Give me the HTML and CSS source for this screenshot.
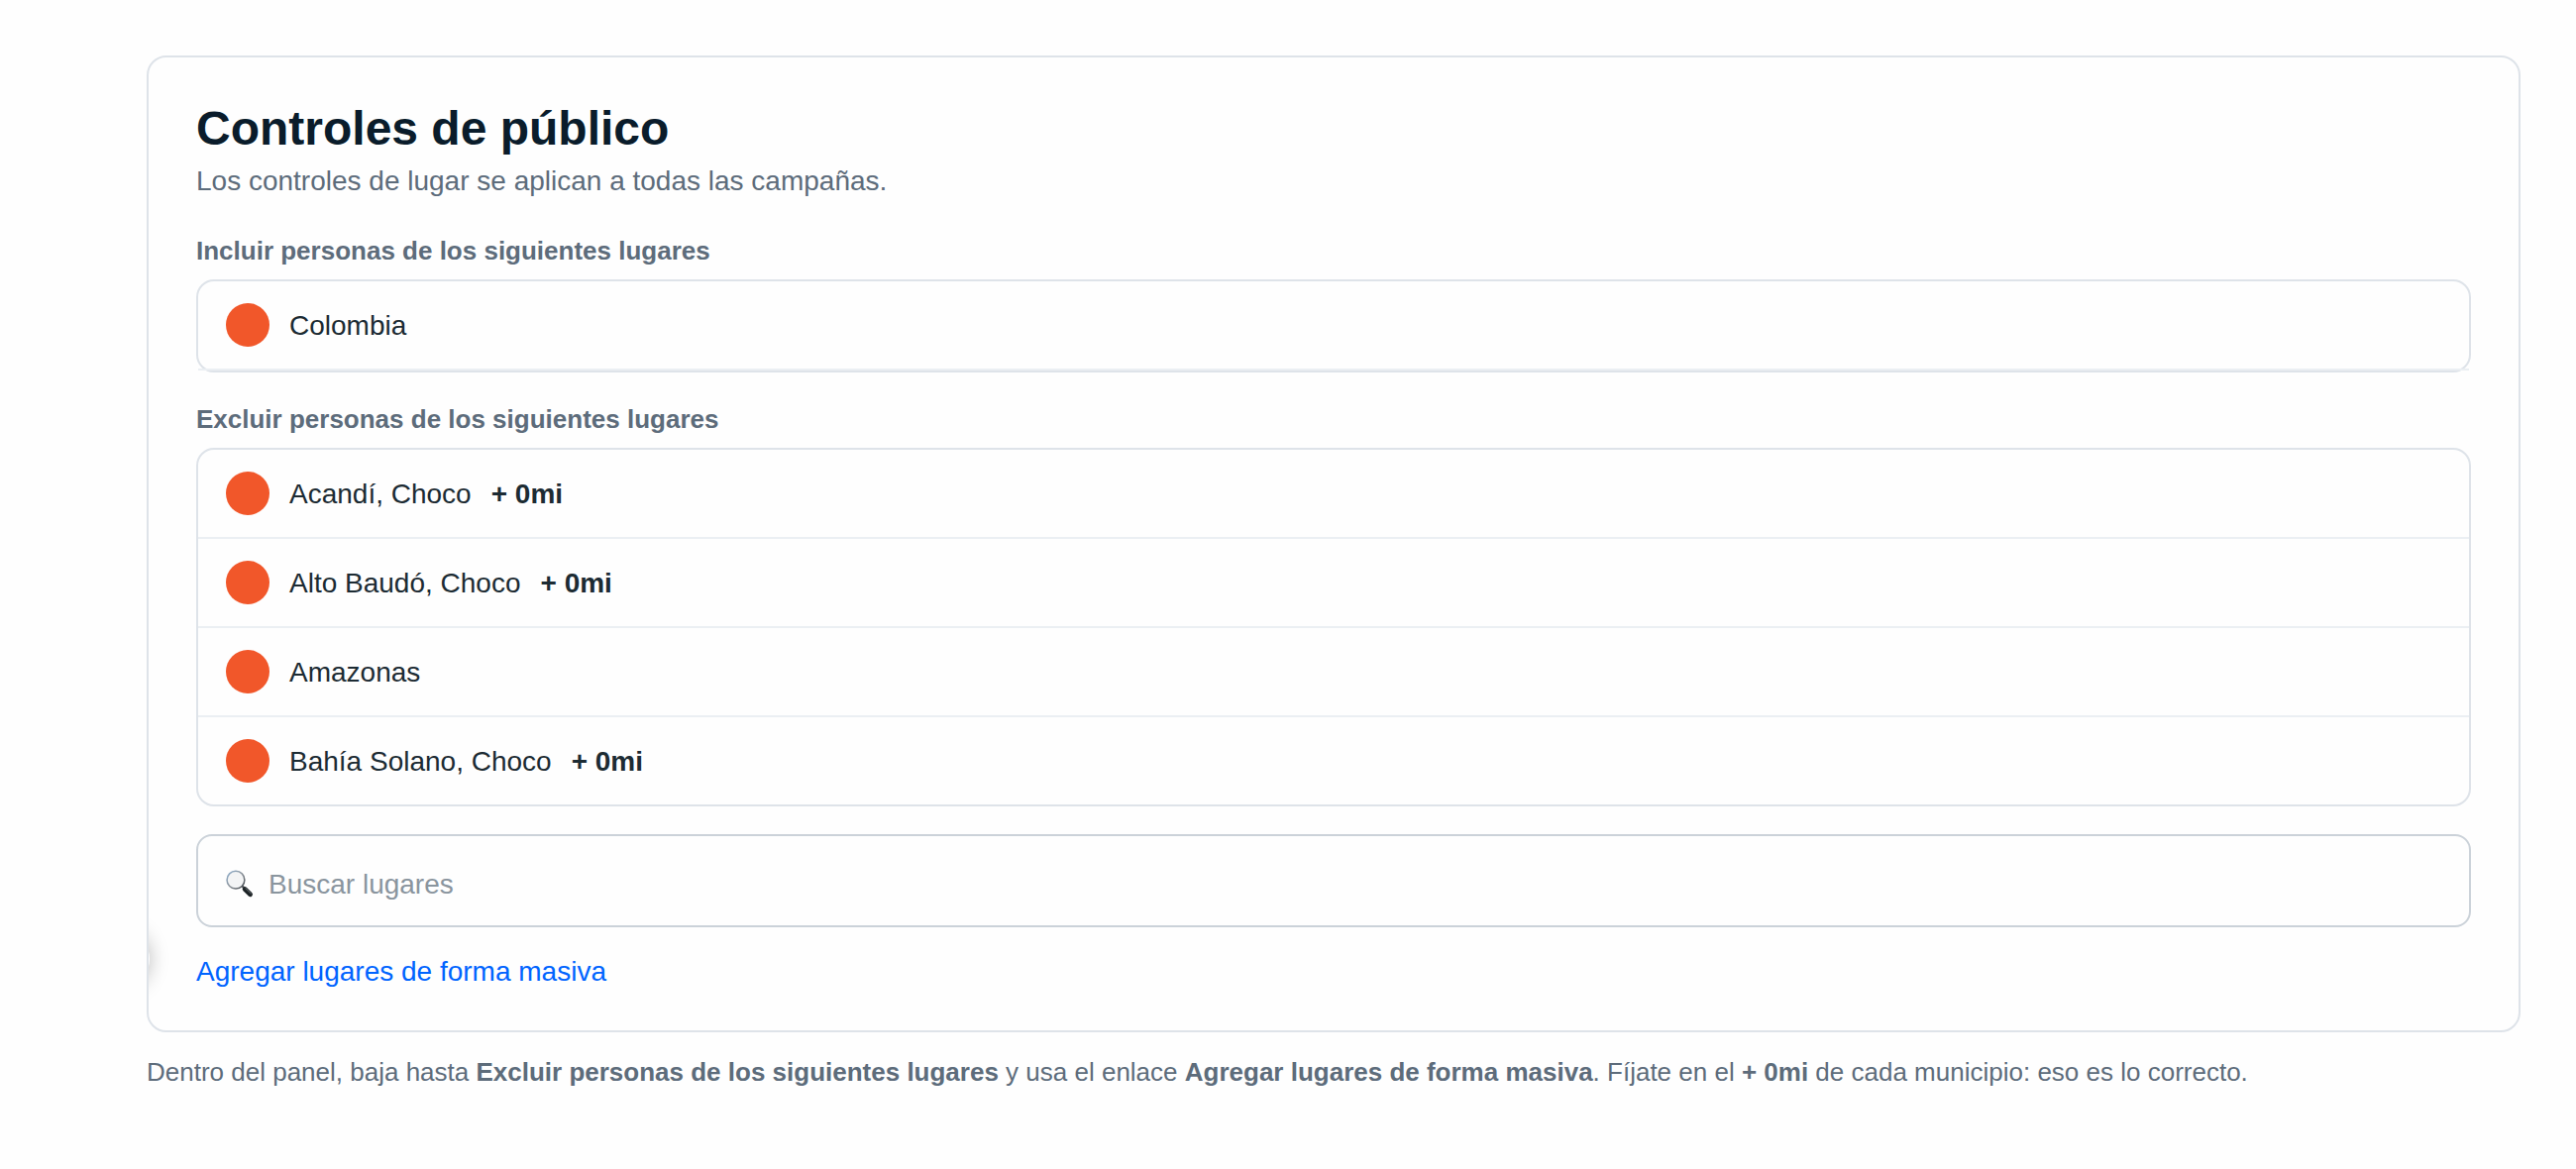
FILE: index.html
```html
<!DOCTYPE html>
<html lang="es">
<head>
  <meta charset="UTF-8" />
  <meta name="viewport" content="width=device-width, initial-scale=1.0"/>
  <title>Controles de público</title>
  <link rel="stylesheet" href="styles.css">
</head>
<body>
  <div class="card">
    <div class="edge-shadow"></div>
    <h1>Controles de público</h1>
    <p class="subtitle">Los controles de lugar se aplican a todas las campañas.</p>

    <h2>Incluir personas de los siguientes lugares</h2>
    <div class="list include">
      <div class="row"><span class="pin"></span><span>Colombia</span></div>
    </div>

    <h2>Excluir personas de los siguientes lugares</h2>
    <div class="list exclude">
      <div class="row"><span class="pin"></span><span>Acandí, Choco</span><b>+ 0mi</b></div>
      <div class="row"><span class="pin"></span><span>Alto Baudó, Choco</span><b>+ 0mi</b></div>
      <div class="row"><span class="pin"></span><span>Amazonas</span></div>
      <div class="row"><span class="pin"></span><span>Bahía Solano, Choco</span><b>+ 0mi</b></div>
    </div>

    <div class="search">
      <svg class="search-icon" viewBox="0 0 30 30" width="29" height="29">
        <defs>
          <linearGradient id="rim" x1="0" y1="0" x2="1" y2="1">
            <stop offset="0" stop-color="#8fb0cf"/>
            <stop offset="0.5" stop-color="#8d949b"/>
            <stop offset="1" stop-color="#3c4146"/>
          </linearGradient>
        </defs>
        <path d="M17 17l4 4" stroke="#55595d" stroke-width="2.5"/>
        <path d="M19.8 20.2l5.6 5.4" stroke="#1d2326" stroke-width="5" stroke-linecap="round"/>
        <path d="M20.5 19.2l5.6 5.4" stroke="#6d7579" stroke-width="1" stroke-linecap="round"/>
        <circle cx="10.3" cy="10.5" r="9.2" fill="#f3f4f5" stroke="url(#rim)" stroke-width="1.6"/>
      </svg>
      <span>Buscar lugares</span>
    </div>

    <a class="bulk-link" href="#">Agregar lugares de forma masiva</a>
  </div>

  <p class="caption">Dentro del panel, baja hasta <b>Excluir personas de los siguientes lugares</b> y usa el enlace <b>Agregar lugares de forma masiva</b>. Fíjate en el <b>+ 0mi</b> de cada municipio: eso es lo correcto.</p>
</body>
</html>
```

FILE: styles.css
```css
* {
  box-sizing: border-box;
}

body {
  margin: 0;
  padding: 56px 56px 0 148px;
  background-color: #fefefe;
  font-family: "Liberation Sans", Helvetica, Arial, sans-serif;
  font-size: 28px;
  line-height: 34px;
  color: #1c2b33;
}

.card {
  position: relative;
  overflow: hidden;
  height: 986px;
  padding: 42px 48px 0;
  border: 2px solid #dee3e9;
  border-radius: 20px;
}

/* soft shadow showing at the left edge of the card */
.edge-shadow {
  position: absolute;
  left: -59px;
  top: 880px;
  width: 60px;
  height: 60px;
  border-radius: 50%;
  box-shadow: 0 0 20px rgba(0, 0, 0, 0.28);
}

h1 {
  margin: 0;
  font-size: 48px;
  line-height: 60px;
  color: #0a1c2b;
}

.subtitle {
  margin: 6px 0 0;
  color: #5d6c7b;
}

h2 {
  margin: 0 0 14px;
  font-size: 26px;
  line-height: 30px;
  color: #5d6c7b;
}

.subtitle + h2 {
  margin-top: 38px;
}

.list {
  border: 2px solid #dee3e9;
  border-radius: 18px;
}

.include {
  height: 94px;
  margin-bottom: 32px;
}

.row {
  display: flex;
  align-items: center;
  gap: 20px;
  height: 90px;
  padding: 0 28px;
  border-bottom: 2px solid #ebeff3;
}

.row span,
.row b {
  padding-top: 2px;
}

.exclude .row:last-child {
  height: 88px;
  border-bottom: none;
}

.row .pin {
  width: 44px;
  height: 44px;
  padding: 0;
  border-radius: 50%;
  background-color: #f1572a;
}

.search {
  display: flex;
  align-items: center;
  gap: 14px;
  height: 94px;
  margin-top: 28px;
  padding: 7px 28px 0;
  border: 2px solid #cbd2d9;
  border-radius: 16px;
  color: #8a959e;
}

.bulk-link {
  display: block;
  margin-top: 28px;
  color: #0064ff;
  text-decoration: none;
}

.caption {
  margin: 25px 0 0;
  font-size: 26px;
  line-height: 30px;
  color: #5d6c7b;
}
```
